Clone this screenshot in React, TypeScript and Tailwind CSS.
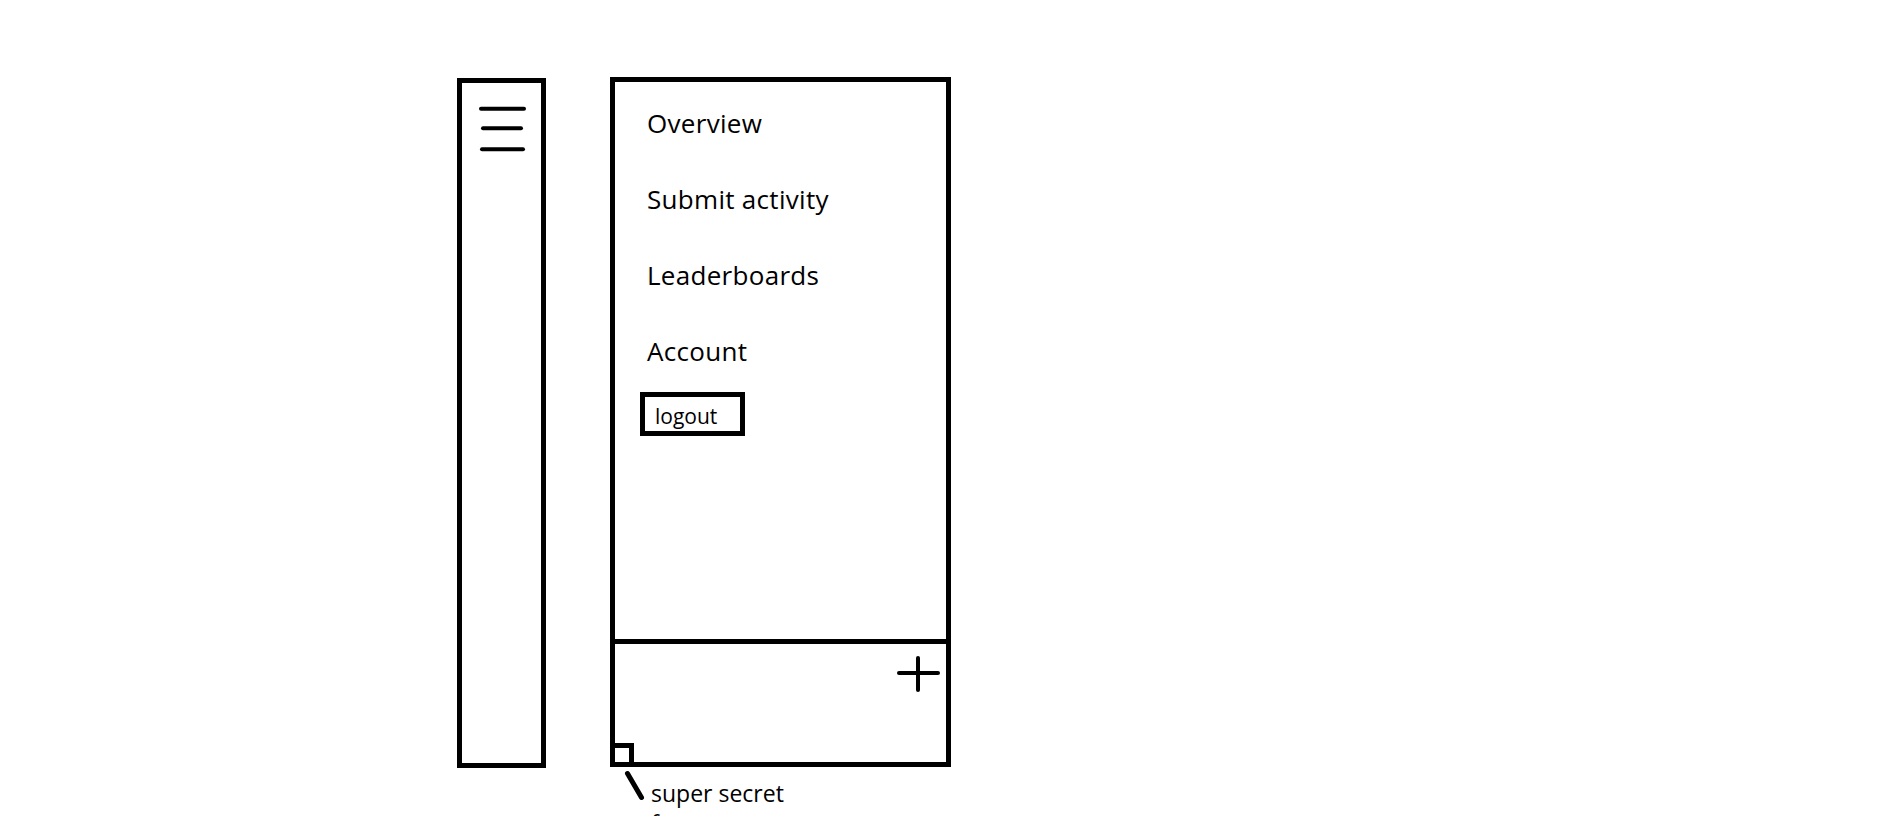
import React from "react";

const font = { fontFamily: '"Open Sans", "DejaVu Sans", sans-serif' };

function Hamburger() {
  return (
    <svg width="79" height="80" viewBox="0 0 79 80" className="block">
      <g stroke="#000" strokeWidth="4" strokeLinecap="round">
        <line x1="19" y1="25.7" x2="62" y2="25.7" />
        <line x1="21" y1="45.3" x2="59" y2="45.3" />
        <line x1="20" y1="66.3" x2="61" y2="66.3" />
      </g>
    </svg>
  );
}

function PlusIcon() {
  return (
    <svg width="43" height="36" viewBox="0 0 43 36" className="block">
      <g stroke="#000" strokeWidth="4" strokeLinecap="round">
        <line x1="2" y1="17" x2="41" y2="17" />
        <line x1="21" y1="2" x2="21" y2="34" />
      </g>
    </svg>
  );
}

function Slash() {
  return (
    <svg width="21" height="31" viewBox="0 0 21 31" className="block">
      <line x1="3.5" y1="3.5" x2="17.5" y2="27.5" stroke="#000" strokeWidth="5" strokeLinecap="round" />
    </svg>
  );
}

const navItems = ["Overview", "Submit activity", "Leaderboards", "Account"];

export default function App() {
  return (
    <div className="h-screen w-full overflow-hidden bg-white text-black" style={font}>
      <div className="flex items-start pt-[77px] pl-[457px] gap-[64px]">
        {/* Collapsed sidebar */}
        <div className="mt-[1px] w-[89px] h-[690px] border-[5px] border-black">
          <Hamburger />
        </div>

        {/* Expanded sidebar */}
        <div className="flex flex-col">
          <div className="w-[341px] h-[690px] border-[5px] border-black flex flex-col">
            <nav className="h-[557px] pt-[28px] pl-[32px] flex flex-col">
              <div className="flex flex-col gap-[50px]">
                {navItems.map((item) => (
                  <div
                    key={item}
                    className="text-[26px] leading-[26px] h-[26px] whitespace-nowrap font-medium tracking-[0.3px]"
                  >
                    {item}
                  </div>
                ))}
              </div>
              <div className="mt-[28px] -ml-[7px]">
                <button className="w-[105px] h-[44px] border-[5px] border-black text-left pl-[10px] pt-[5px] text-[21px] leading-[21px]">
                  logout
                </button>
              </div>
            </nav>
            <div className="border-t-[5px] border-black flex-1 flex flex-col">
              <div className="flex justify-end pt-[12px] pr-[6px]">
                <PlusIcon />
              </div>
              <div className="mt-auto w-[19px] h-[19px] border-t-[5px] border-r-[5px] border-black" />
            </div>
          </div>
          <div className="flex items-start">
            <div className="ml-[14px] mt-[3px]">
              <Slash />
            </div>
            <div className="ml-[6px] mt-[15px] text-[23px] leading-[23px]">
              <div className="h-[23px]">super secret</div>
              <div className="mt-[7px] h-[23px]">feature</div>
            </div>
          </div>
        </div>
      </div>
    </div>
  );
}
